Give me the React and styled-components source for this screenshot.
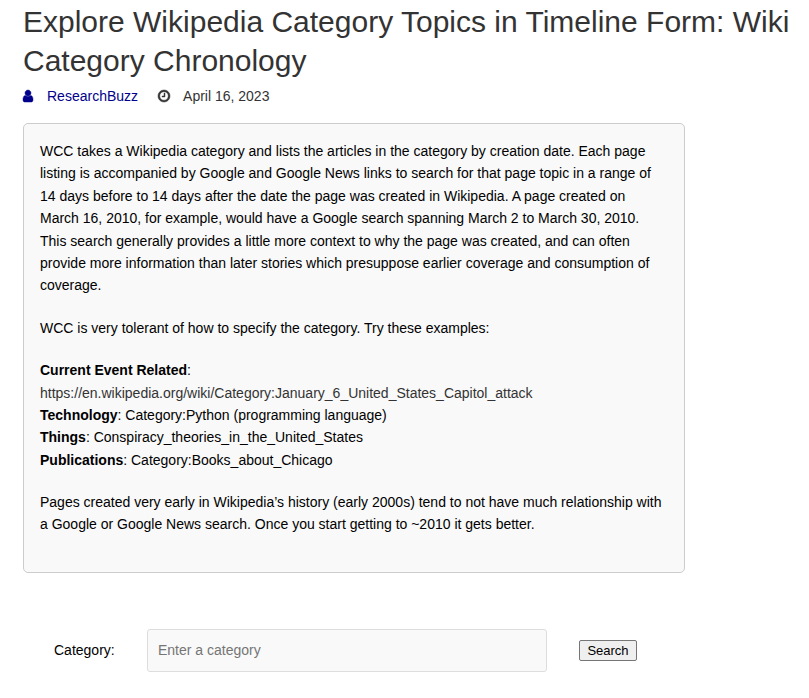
import React from 'react';
import styled, { createGlobalStyle } from 'styled-components';

const GlobalStyle = createGlobalStyle`
  *, *::before, *::after { box-sizing: border-box; }
  body {
    margin: 0;
    background: #fff;
    color: #333;
    font-family: "Liberation Sans", Arial, sans-serif;
    font-size: 14px;
  }
`;

const Page = styled.main`
  padding: 2px 16px 16px 23px;
`;

const Title = styled.h1`
  margin: 0;
  font-size: 30px;
  font-weight: 400;
  line-height: 39px;
`;

const Meta = styled.div`
  display: flex;
  align-items: center;
  gap: 19px;
  margin-top: 4px;
  height: 24px;
`;

const MetaItem = styled.span`
  display: flex;
  align-items: center;
  gap: ${({ $gap }) => $gap}px;

  svg {
    display: block;
    overflow: visible;
    fill: currentColor;
    stroke: currentColor;
    stroke-width: 60px;
  }
`;

const Author = styled(MetaItem)`
  color: #00008b;
`;

const AuthorLink = styled.a`
  color: inherit;
  text-decoration: none;
`;

const Panel = styled.section`
  max-width: 662px;
  margin-top: 15px;
  padding: 16px 16px 36px;
  border: 1px solid #ccc;
  border-radius: 5px;
  background: #f9f9f9;
  color: #000;
`;

const Paragraph = styled.p`
  margin: 0 0 20px;
  line-height: 1.6;

  &:last-child { margin-bottom: 0; }
`;

const ExampleLink = styled.a`
  color: #333;
  text-decoration: none;
`;

const SearchForm = styled.form`
  display: flex;
  align-items: center;
  margin: 56px 0 0 31px;
  color: #000;
`;

const Label = styled.label`
  width: 93px;
  padding-bottom: 1px;
`;

const CategoryInput = styled.input`
  width: 400px;
  height: 43px;
  padding: 0 10px 1px;
  border: 1px solid #ddd;
  border-radius: 3px;
  background: #f9f9f9;
  font: inherit;

  &::placeholder { color: #757575; }
`;

const SearchButton = styled.button`
  margin-left: 32px;
  width: 58px;
  height: 21px;
  padding: 0;
  border: 1px solid #767676;
  border-radius: 2px;
  background: #efefef;
  color: #000;
  font: 13px "Liberation Sans", Arial, sans-serif;
`;

const UserIcon = () => (
  <svg width="10" height="14" viewBox="0 0 1280 1792" aria-hidden="true">
    <path d="M1280 1399q0 109-62.500 187t-150.500 78h-854q-88 0-150.500-78t-62.500-187q0-85 8.500-160.500t31.500-152 58.500-131 94-89 134.500-34.500q131 128 313 128t313-128q76 0 134.500 34.500t94 89 58.500 131 31.500 152 8.500 160.500zm-256-887q0 159-112.500 271.500t-271.500 112.500-271.500-112.500-112.500-271.500 112.500-271.500 271.500-112.500 271.500 112.500 112.500 271.500z" />
  </svg>
);

const ClockIcon = () => (
  <svg width="14" height="14" viewBox="0 0 1792 1792" aria-hidden="true">
    <path d="M1024 544v448q0 14-9 23t-23 9h-320q-14 0-23-9t-9-23v-64q0-14 9-23t23-9h224v-352q0-14 9-23t23-9h64q14 0 23 9t9 23zm416 352q0-148-73-273t-198-198-273-73-273 73-198 198-73 273 73 273 198 198 273 73 273-73 198-198 73-273zm224 0q0 209-103 385.500t-279.500 279.500-385.500 103-385.500-103-279.500-279.500-103-385.500 103-385.500 279.500-279.500 385.500-103 385.500 103 279.500 279.500 103 385.500z" />
  </svg>
);

export default function App() {
  return (
    <>
      <GlobalStyle />
      <Page>
        <Title>
          Explore Wikipedia Category Topics in Timeline Form: Wiki Category Chronology
        </Title>
        <Meta>
          <Author $gap={14}>
            <UserIcon />
            <AuthorLink href="#author">ResearchBuzz</AuthorLink>
          </Author>
          <MetaItem $gap={12}>
            <ClockIcon />
            <time dateTime="2023-04-16">April 16, 2023</time>
          </MetaItem>
        </Meta>
        <Panel>
          <Paragraph>
            WCC takes a Wikipedia category and lists the articles in the category by creation
            date. Each page listing is accompanied by Google and Google News links to search for
            that page topic in a range of 14 days before to 14 days after the date the page was
            created in Wikipedia. A page created on March 16, 2010, for example, would have a
            Google search spanning March 2 to March 30, 2010. This search generally provides a
            little more context to why the page was created, and can often provide more
            information than later stories which presuppose earlier coverage and consumption of
            coverage.
          </Paragraph>
          <Paragraph>
            WCC is very tolerant of how to specify the category. Try these examples:
          </Paragraph>
          <Paragraph>
            <strong>Current Event Related</strong>:{' '}
            <ExampleLink href="https://en.wikipedia.org/wiki/Category:January_6_United_States_Capitol_attack">
              https://en.wikipedia.org/wiki/Category:January_6_United_States_Capitol_attack
            </ExampleLink>
            <br />
            <strong>Technology</strong>: Category:Python (programming language)
            <br />
            <strong>Things</strong>: Conspiracy_theories_in_the_United_States
            <br />
            <strong>Publications</strong>: Category:Books_about_Chicago
          </Paragraph>
          <Paragraph>
            Pages created very early in Wikipedia’s history (early 2000s) tend to not have much
            relationship with a Google or Google News search. Once you start getting to ~2010 it
            gets better.
          </Paragraph>
        </Panel>
        <SearchForm onSubmit={(event) => event.preventDefault()}>
          <Label htmlFor="category">Category:</Label>
          <CategoryInput id="category" name="category" type="text" placeholder="Enter a category" />
          <SearchButton type="submit">Search</SearchButton>
        </SearchForm>
      </Page>
    </>
  );
}
